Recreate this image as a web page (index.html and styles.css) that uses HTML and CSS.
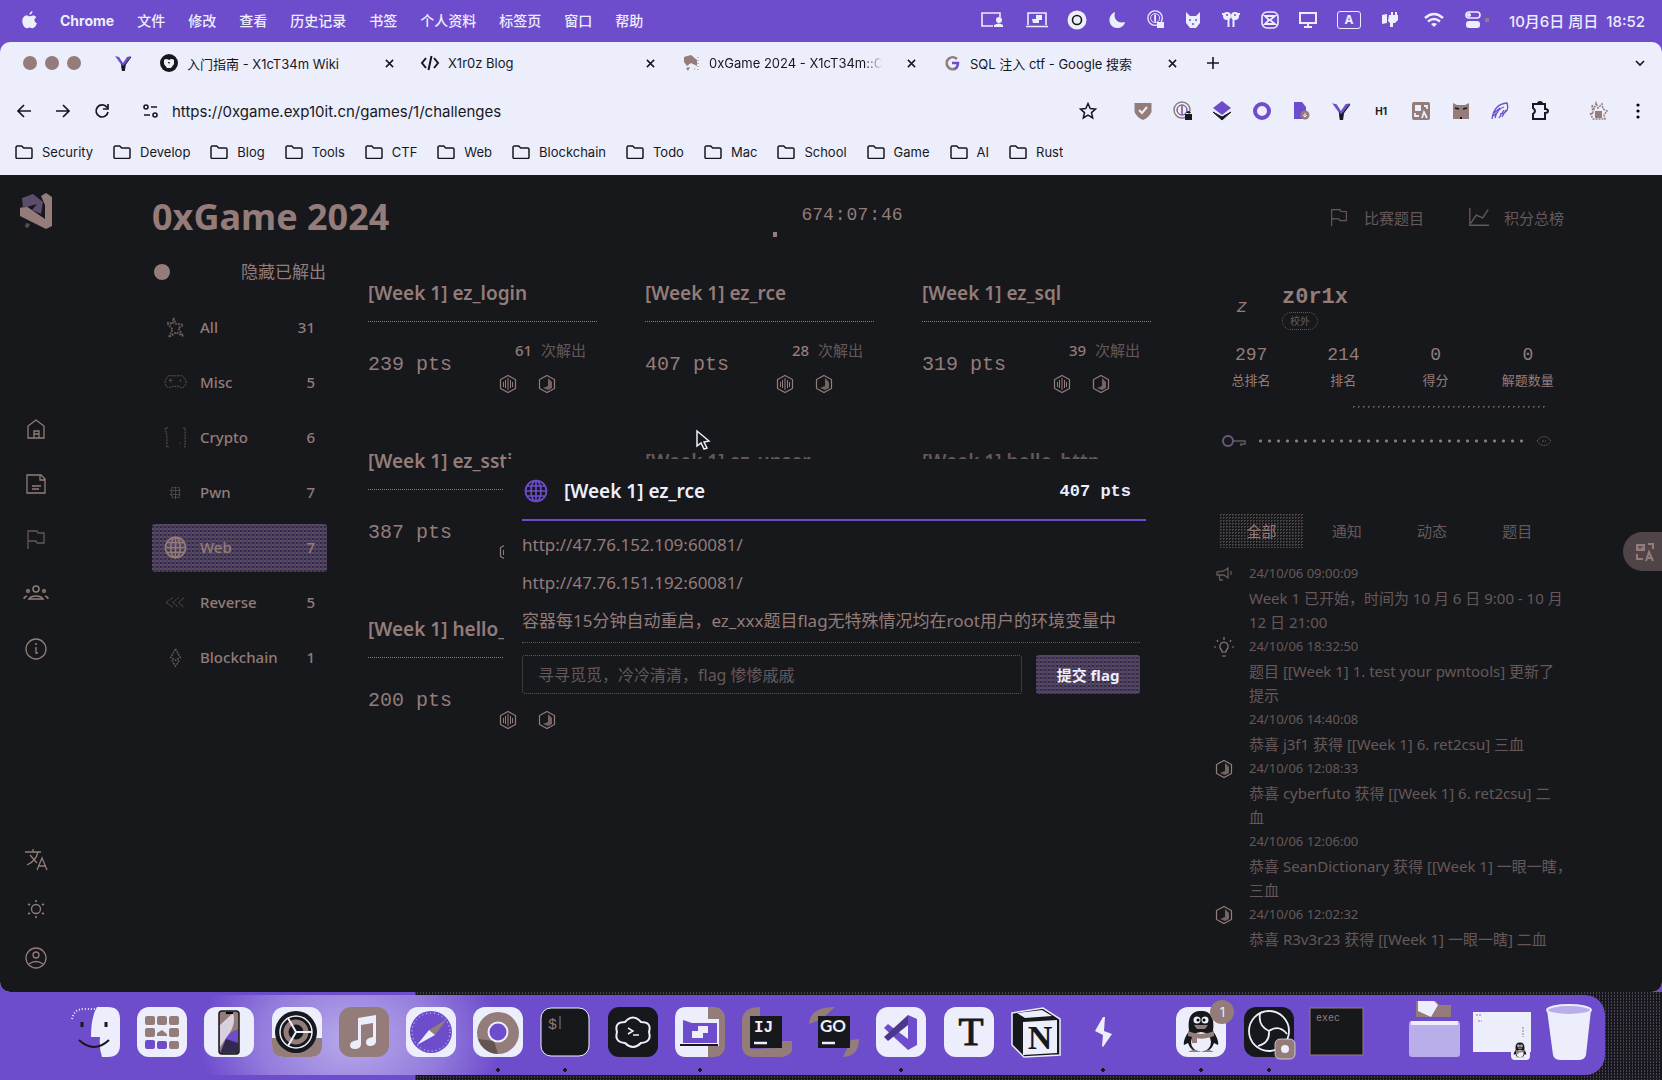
FILE: index.html
```html
<!DOCTYPE html>
<html lang="zh-CN">
<head>
<meta charset="utf-8">
<title>0xGame 2024</title>
<link rel="stylesheet" href="styles.css">
</head>
<body>
<svg class="sprite" aria-hidden="true">
  <symbol id="folder" viewBox="0 0 18 14"><path d="M1 12.2V2.4C1 1.6 1.500 1 2.300 1h4.400l2 2h7c.8 0 1.300.6 1.300 1.300v8c0 .7-.5 1.200-1.300 1.200H2.300C1.500 13.500 1 13 1 12.200z" fill="none" stroke="currentColor" stroke-width="1.500"/></symbol>
  <symbol id="close" viewBox="0 0 10 10"><path d="M1 1l8 8M9 1L1 9" stroke="currentColor" stroke-width="1.700"/></symbol>
  <symbol id="vee" viewBox="0 0 18 18"><path d="M1 2l4 1 4 6 4-6 4-1-5 8-1 7H8l-1-7z" fill="#6e4dcd"/><path d="M1 3l6 7 1 7h2l1-7-2 2z" fill="#17181c"/><path d="M17 3l-6 8-1 6" fill="none" stroke="#17181c"/></symbol>
  <symbol id="globe" viewBox="0 0 24 24"><g fill="none" stroke="currentColor" stroke-width="1.700"><circle cx="12" cy="12" r="10.500"/><ellipse cx="12" cy="12" rx="5" ry="10.500"/><path d="M1.500 12h21M3 7h18M3 17h18M12 1.500v21"/></g></symbol>
  <symbol id="flag" viewBox="0 0 24 24"><path d="M4 22V4h9l1 2h6v10h-7l-1-2H4" fill="none" stroke="currentColor" stroke-width="1.300"/></symbol>
  <symbol id="hexa" viewBox="0 0 20 20"><path d="M10 1.500l7.500 4v9l-7.500 4-7.500-4v-9z" fill="none" stroke="currentColor" stroke-width="1.200"/><path d="M10 4v12M7.500 6v8M12.500 6v8M5.500 8v5M14.500 8v5" stroke="currentColor"/></symbol>
  <symbol id="hexb" viewBox="0 0 20 20"><path d="M10 1.500l7.500 4v9l-7.500 4-7.500-4v-9z" fill="none" stroke="currentColor" stroke-width="1.200"/><path d="M11 4l4 4v6l-4 2-5-2 5-2z" fill="currentColor" opacity=".75"/></symbol>
  <symbol id="onepass" viewBox="0 0 20 20"><circle cx="9" cy="9" r="8" fill="none" stroke="currentColor" stroke-width="1.500"/><circle cx="9" cy="9" r="5" fill="none" stroke="currentColor"/><path d="M9 5v8" stroke="currentColor" stroke-width="2"/></symbol>
  <symbol id="penguin" viewBox="0 0 50 50"><path d="M13 24C11 8 17 4 25 4s14 4 12 20c4 6 6 11 5 14l-4-2c-2 6-6 9-13 9s-11-3-13-9l-4 2c-1-3 1-8 5-14z" fill="#17181c"/><ellipse cx="25" cy="35" rx="10" ry="10" fill="#eceefc"/><path d="M12 24q13 6 26 0v5q-12 4-17 2v5h-5v-6l-4-1zM18 18h14l-3 4h-8zM12 45q6-4 12 0zM26 45q6-4 12 0z" fill="#937c79"/><circle cx="21" cy="13" r="3.500" fill="#eceefc"/><circle cx="29" cy="13" r="3.500" fill="#eceefc"/><circle cx="22" cy="13" r="1.500"/><circle cx="28" cy="13" r="1.500"/></symbol>
</svg>

<header class="menubar">
  <nav class="menus" aria-label="系统菜单">
    <svg width="15" height="18" viewBox="0 0 15 18"><path d="M10.500 0c.1 2-1.200 3.700-3 3.800C7.300 2.100 8.800.4 10.500 0zM14.300 6.200c-2.700 1.700-2.200 4.900.6 6-1 2.800-2.500 5-4.300 5-1.200 0-1.600-.8-3-.8s-1.900.8-3 .8C2.500 17.200.3 13.500.3 10c0-3.600 2.200-5.500 4.400-5.500 1.200 0 2.200.8 3 .8s1.900-.9 3.400-.9c1.100 0 2.400.6 3.200 1.800z" fill="currentColor"/></svg>
    <b>Chrome</b><span>文件</span><span>修改</span><span>查看</span><span>历史记录</span><span>书签</span><span>个人资料</span><span>标签页</span><span>窗口</span><span>帮助</span>
  </nav>
  <div class="status">
    <svg width="26" height="18" viewBox="0 0 26 18"><path d="M14 15H3V2h18v4" fill="none" stroke="currentColor" stroke-width="1.600"/><circle cx="20" cy="9" r="3" fill="currentColor"/><path d="M15 16v-2q5-3 9 0v2z" fill="currentColor"/></svg>
    <svg width="24" height="18" viewBox="0 0 24 18"><path d="M3 14V2h18v12M1 15.500h22" fill="none" stroke="currentColor" stroke-width="1.600"/><path d="M7 8h4V4h6v5h-3v3H8z" fill="currentColor"/></svg>
    <svg width="20" height="20" viewBox="0 0 20 20"><circle cx="10" cy="10" r="9.500" fill="currentColor"/><circle cx="10" cy="10" r="4.500" fill="none" stroke="#17181c" stroke-width="1.600"/></svg>
    <svg width="20" height="18" viewBox="0 0 20 18"><path d="M8 1c-2 7 3 12 10 10-1 4-4 6-8 6-8 0-11-12-2-16z" fill="currentColor"/></svg>
    <svg width="18" height="20" viewBox="0 0 18 20"><use href="#onepass" width="18" height="18"/><path d="M10 12h7v6h-7z" fill="currentColor"/></svg>
    <svg width="16" height="18" viewBox="0 0 16 18"><path d="M1 1l4 4h6l4-4v11l-4 5H5l-4-5z" fill="currentColor"/><path d="M4 9h2M10 9h2M7 13h2" stroke="#6e4dcd" stroke-width="1.500"/></svg>
    <svg width="20" height="18" viewBox="0 0 20 18"><circle cx="6" cy="5" r="4" fill="currentColor"/><circle cx="14" cy="5" r="4" fill="currentColor"/><path d="M7.500 5v11M12.500 5v11M1 3h2M17 3h2" fill="none" stroke="currentColor" stroke-width="2"/><circle cx="6" cy="4" r="1" fill="#6e4dcd"/><circle cx="14" cy="4" r="1" fill="#6e4dcd"/></svg>
    <svg width="18" height="18" viewBox="0 0 18 18"><rect x="1" y="1" width="16" height="16" rx="5" fill="none" stroke="currentColor" stroke-width="1.600"/><path d="M4 5h10L9 9l5 4H4l4-4z" fill="none" stroke="currentColor" stroke-width="1.800"/></svg>
    <svg width="18" height="18" viewBox="0 0 18 18"><rect x="1" y="2" width="16" height="10" fill="none" stroke="currentColor" stroke-width="2"/><path d="M5 16h8M9 12v4" stroke="currentColor" stroke-width="2"/></svg>
    <span class="ime">A</span>
    <svg width="22" height="18" viewBox="0 0 22 18"><path d="M1 4l5-1v9l-5 1zM8 4h2V1h2v3h2V1h2v3h1v5l-3 3h-2v4H9v-4l-2-2z" fill="currentColor"/></svg>
    <svg width="22" height="16" viewBox="0 0 22 16"><path d="M2 6q9-8 18 0M5 9.500q6-5 12 0" fill="none" stroke="currentColor" stroke-width="2.400"/><path d="M11 15l-3-3q3-2 6 0z" fill="currentColor"/></svg>
    <svg width="24" height="18" viewBox="0 0 24 18"><rect x="1" y="1" width="14" height="6" rx="3" fill="none" stroke="currentColor" stroke-width="1.600"/><rect x="1" y="10" width="14" height="7" rx="3" fill="currentColor"/><circle cx="4" cy="4" r="2" fill="currentColor"/><path d="M20 7h4v4h-4z" fill="#937c79"/></svg>
    <time>10月6日 周日&nbsp; 18:52</time>
  </div>
</header>

<div class="window">
  <div class="tabs">
    <div class="lights"><i></i><i></i><i></i></div>
    <svg class="pinned" width="18" height="18"><use href="#vee"/></svg>
    <div class="tab"><svg width="18" height="18" viewBox="0 0 18 18"><circle cx="9" cy="9" r="9" fill="#17181c"/><path d="M4 6q2-2 5 0 3-2 5 0v4l-3 4H7L4 10z" fill="#eceefc"/><path d="M8 8l1 2 1-2z"/></svg><span>入门指南 - X1cT34m Wiki</span><button aria-label="关闭"><svg width="9" height="9"><use href="#close"/></svg></button></div>
    <div class="tab"><svg width="18" height="18" viewBox="0 0 18 18"><path d="M5 4L1 9l4 5M13 4l4 5-4 5M10.500 2l-3 14" fill="none" stroke="#17181c" stroke-width="2"/></svg><span>X1r0z Blog</span><button aria-label="关闭"><svg width="9" height="9"><use href="#close"/></svg></button></div>
    <div class="tab"><svg width="18" height="18" viewBox="0 0 18 18"><path d="M2 3l7-2 6 5v6l-6-3-4 3-3-4zM4 14l4-1-2 4z" fill="#937c79"/><path d="M16 3v13M12 15h3" stroke="#937c79" stroke-dasharray="1 2"/></svg><span class="fade">0xGame 2024 - X1cT34m::C</span><button aria-label="关闭"><svg width="9" height="9"><use href="#close"/></svg></button></div>
    <div class="tab"><svg width="18" height="18" viewBox="0 0 18 18"><path d="M14 5A6 6 0 1 0 12.500 14.500" fill="none" stroke="#937c79" stroke-width="2.600"/><path d="M9 9h6q0 4-3 6" fill="none" stroke="#6e4dcd" stroke-width="2.500"/></svg><span>SQL 注入 ctf - Google 搜索</span><button aria-label="关闭"><svg width="9" height="9"><use href="#close"/></svg></button></div>
    <button class="plus" aria-label="新标签页"><svg width="12" height="12" viewBox="0 0 12 12"><path d="M6 0v12M0 6h12" stroke="currentColor" stroke-width="1.600"/></svg></button>
    <button class="more" aria-label="搜索标签页"><svg width="10" height="7" viewBox="0 0 10 7"><path d="M1 1l4 4 4-4" fill="none" stroke="currentColor" stroke-width="1.700"/></svg></button>
  </div>
  <div class="toolbar">
    <button aria-label="后退"><svg width="16" height="14" viewBox="0 0 16 14"><path d="M15 7H2M8 1L2 7l6 6" fill="none" stroke="currentColor" stroke-width="1.700"/></svg></button>
    <button aria-label="前进"><svg width="16" height="14" viewBox="0 0 16 14"><path d="M1 7h13M8 1l6 6-6 6" fill="none" stroke="currentColor" stroke-width="1.700"/></svg></button>
    <button aria-label="刷新"><svg width="16" height="16" viewBox="0 0 16 16"><path d="M13 4.500A6 6 0 1 0 14 9M14 1v5H9" fill="none" stroke="currentColor" stroke-width="1.700"/></svg></button>
    <svg class="tune" width="15" height="14" viewBox="0 0 15 14"><g fill="none" stroke="currentColor" stroke-width="1.600"><circle cx="3" cy="3" r="2"/><path d="M8 3h6M1 11h6"/><circle cx="12" cy="11" r="2"/></g></svg>
    <input class="url" aria-label="地址" value="https://0xgame.exp10it.cn/games/1/challenges">
    <svg class="star" width="18" height="18" viewBox="0 0 18 18"><path d="M9 1.500l2.200 5 5.300.5-4 3.600 1.200 5.400L9 13.200 4.300 16l1.200-5.400-4-3.600 5.300-.5z" fill="none" stroke="currentColor" stroke-width="1.500"/></svg>
    <div class="exts">
      <svg viewBox="0 0 20 20"><path d="M1.500 2h17v9q-2 5-8.500 8-6.500-3-8.500-8z" fill="#937c79"/><path d="M6 9l3 3 5-6" fill="none" stroke="#eceefc" stroke-width="2"/></svg>
      <svg viewBox="0 0 20 20"><g color="#937c79"><use href="#onepass"/></g><circle cx="9" cy="9" r="5" fill="none" stroke="#6e4dcd"/><path d="M12 13h7v6h-7zM13 12q2.500-4 5 0" fill="#17181c"/></svg>
      <svg viewBox="0 0 20 20"><path d="M10 0l9 7-9 7-9-7z" fill="#6e4dcd"/><path d="M1 11l9 5 9-5-9 8z" fill="#17181c" stroke="#17181c"/></svg>
      <svg viewBox="0 0 20 20"><circle cx="10" cy="10" r="7" fill="none" stroke="#6e4dcd" stroke-width="4"/></svg>
      <svg viewBox="0 0 20 20"><path d="M2 1h8l4 5v12H2z" fill="#6e4dcd"/><circle cx="13" cy="14" r="4.500" fill="#937c79"/><path d="M13 12v4M11 14l2 2 2-2" stroke="#eceefc" fill="none"/></svg>
      <svg viewBox="0 0 20 20"><use href="#vee"/></svg>
      <b>H1</b>
      <svg viewBox="0 0 20 20"><rect x="1" y="1" width="18" height="18" rx="2" fill="#937c79"/><path d="M4 4h6v6H4z" fill="#eceefc"/><path d="M13 5h3v3M4 12v3h4M11 17l2-6 3 6" fill="none" stroke="#eceefc" stroke-width="1.800"/></svg>
      <svg viewBox="0 0 20 20"><path d="M2 2l4 2h8l4-2v16H2z" fill="#937c79"/><path d="M4 7l4 1M16 7l-4 1M9 17h2" stroke="#17181c" stroke-width="1.800"/></svg>
      <svg viewBox="0 0 20 20"><path d="M2 18Q4 3 17 2 20 12 10 13M5 17q2-9 9-11M9 17l5-8M12 16l4-7M4 12l6-5M3 15l5-4" fill="none" stroke="#6e4dcd" stroke-width="1.300"/></svg>
      <svg viewBox="0 0 20 20"><path d="M3 3h12v5q3 0 3 2t-3 2v6H3v-5q4-3 0-6zM8 3q0-2 2-2t2 2" fill="none" stroke="currentColor" stroke-width="2"/></svg>
    </div>
    <svg class="avatar" width="20" height="20" viewBox="0 0 20 20"><path d="M4 4l2 4 2-6 2 5 4-4 1 5 4 2-3 4 1 4H5L2 12l3 1z" fill="none" stroke="#937c79" stroke-width="1.500" stroke-dasharray="2 1"/><path d="M7 10h7v7H7z" fill="#937c79"/></svg>
    <svg width="4" height="18" viewBox="0 0 4 18"><circle cx="2" cy="3" r="1.600"/><circle cx="2" cy="9" r="1.600"/><circle cx="2" cy="15" r="1.600"/></svg>
  </div>
  <nav class="bookmarks" aria-label="书签">
    <a href="#"><svg><use href="#folder"/></svg>Security</a><a href="#"><svg><use href="#folder"/></svg>Develop</a><a href="#"><svg><use href="#folder"/></svg>Blog</a><a href="#"><svg><use href="#folder"/></svg>Tools</a><a href="#"><svg><use href="#folder"/></svg>CTF</a><a href="#"><svg><use href="#folder"/></svg>Web</a><a href="#"><svg><use href="#folder"/></svg>Blockchain</a><a href="#"><svg><use href="#folder"/></svg>Todo</a><a href="#"><svg><use href="#folder"/></svg>Mac</a><a href="#"><svg><use href="#folder"/></svg>School</a><a href="#"><svg><use href="#folder"/></svg>Game</a><a href="#"><svg><use href="#folder"/></svg>AI</a><a href="#"><svg><use href="#folder"/></svg>Rust</a>
  </nav>

  <div class="app">
    <aside class="rail">
      <svg width="34" height="38" viewBox="0 0 34 38"><path d="M22 4l5-3 6 4v29l-6 3L1 24v-8l6-2 19 13V13z" fill="currentColor"/><path d="M3 6l11-4 10 8-2 12-9-4 5-6-14 4z" fill="#5b4e6c"/><path d="M7 31l4 1-2 4-3-1z" fill="#5b4e50"/></svg>
      <nav class="rail-main" aria-label="导航">
        <a href="#" aria-label="主页"><svg viewBox="0 0 24 24"><path d="M4 21V9l8-6 8 6v12zM10 21v-7h5v7M10 17h5" fill="none" stroke="currentColor" stroke-width="1.300"/></svg></a>
        <a href="#" aria-label="文章"><svg viewBox="0 0 24 24"><path d="M3 3h14l4 4v14H3zM16 3v5h5M8 14h9M8 17h7" fill="none" stroke="currentColor" stroke-width="1.300"/></svg></a>
        <a href="#" class="dim" aria-label="比赛"><svg><use href="#flag"/></svg></a>
        <a href="#" aria-label="队伍"><svg viewBox="0 0 24 24"><g fill="none" stroke="currentColor" stroke-width="1.500"><circle cx="12" cy="7" r="3"/><circle cx="4" cy="9" r="1.300"/><circle cx="20" cy="9" r="1.300"/><path d="M5 17q2-3 7-3t7 3zM0 17q0-2 3-3M24 17q0-2-3-3"/></g></svg></a>
        <a href="#" aria-label="关于"><svg viewBox="0 0 24 24"><circle cx="12" cy="12" r="10" fill="none" stroke="currentColor" stroke-width="1.300"/><path d="M11 7h2M11 11h1v5h2" fill="none" stroke="currentColor" stroke-width="1.300"/></svg></a>
      </nav>
      <nav class="rail-foot" aria-label="设置">
        <a href="#" aria-label="语言"><svg viewBox="0 0 24 24"><path d="M1 4h16M9 1v3M14 4q-2 9-11 13M6 7l7 8M13 22l5-12 5 12M14 18h8" fill="none" stroke="currentColor" stroke-width="1.300"/></svg></a>
        <a href="#" aria-label="主题"><svg viewBox="0 0 24 24"><circle cx="12" cy="12" r="4.500" fill="none" stroke="currentColor" stroke-width="1.300"/><path d="M12 3v2M12 19v2M4 7l2 1M18 16l2 1M4 17l2-1M18 8l2-1" stroke="currentColor" stroke-width="1.600"/></svg></a>
        <a href="#" aria-label="账户"><svg viewBox="0 0 24 24"><g fill="none" stroke="currentColor" stroke-width="1.300"><circle cx="12" cy="12" r="10"/><circle cx="12" cy="9" r="3"/><path d="M5 18q7-5 14 0"/></g></svg></a>
      </nav>
    </aside>

    <main class="page">
      <div class="head">
        <h1>0xGame 2024</h1>
        <div class="timer"><time>674<i>:</i>07<i>:</i>46</time><span class="bar"></span></div>
        <nav class="links" aria-label="比赛">
          <a href="#"><svg><use href="#flag"/></svg>比赛题目</a>
          <a href="#"><svg viewBox="0 0 24 24"><path d="M2 2v19h21M3 19l6-9 7 3 6-9" fill="none" stroke="currentColor" stroke-width="1.500"/></svg>积分总榜</a>
        </nav>
      </div>
      <div class="cols">
        <div class="left">
          <label class="toggle"><input type="checkbox"><span>隐藏已解出</span></label>
          <div class="cats">
            <button><svg class="dim" viewBox="0 0 24 24"><path d="M10 2l2 6 8 1-5 4 5 8-7-4-8 5 4-8-6-7 6 1z" fill="none" stroke="currentColor" stroke-width="2" stroke-dasharray="2 1"/></svg><span>All</span><span>31</span></button>
            <button><svg class="dim" viewBox="0 0 24 24"><path d="M5 5h14q4 3 4 8-3 7-7 3H8q-4 4-7-3 0-5 4-8zM7 8v4M5 10h4M17 9v3" fill="none" stroke="currentColor" stroke-dasharray="2 1"/></svg><span>Misc</span><span>5</span></button>
            <button><svg class="dim" viewBox="0 0 24 24"><path d="M4 2H1l2 8v12h2M20 2h2v20h-2M16 18h1" fill="none" stroke="currentColor" stroke-dasharray="2 1"/></svg><span>Crypto</span><span>6</span></button>
            <button><svg class="dim" viewBox="0 0 24 24"><path d="M8 7h8v10H8zM6 10h12M6 14h12M12 6v13" fill="none" stroke="currentColor" stroke-dasharray="2 1"/></svg><span>Pwn</span><span>7</span></button>
            <button class="on"><svg><use href="#globe"/></svg><span>Web</span><span>7</span></button>
            <button><svg class="dim" viewBox="0 0 24 24"><path d="M9 7l-7 5 7 5M15 7l-6 5 6 5M21 7l-6 5 6 5" fill="none" stroke="currentColor" stroke-dasharray="2 1"/></svg><span>Reverse</span><span>5</span></button>
            <button><svg class="dim" viewBox="0 0 24 24"><path d="M12 3l5 9-5 3-5-3zM8 15l4 6 4-6" fill="none" stroke="currentColor" stroke-width="1.500" stroke-dasharray="2 1"/></svg><span>Blockchain</span><span>1</span></button>
          </div>
        </div>

        <section class="cards">
          <article><h2>[Week 1] ez_login</h2><div class="row"><span class="pts">239 pts</span><div class="solved"><p><b>61</b> 次解出</p><svg><use href="#hexa"/></svg><svg><use href="#hexb"/></svg></div></div></article>
          <article><h2>[Week 1] ez_rce</h2><div class="row"><span class="pts">407 pts</span><div class="solved"><p><b>28</b> 次解出</p><svg><use href="#hexa"/></svg><svg><use href="#hexb"/></svg></div></div></article>
          <article><h2>[Week 1] ez_sql</h2><div class="row"><span class="pts">319 pts</span><div class="solved"><p><b>39</b> 次解出</p><svg><use href="#hexa"/></svg><svg><use href="#hexb"/></svg></div></div></article>
          <article><h2>[Week 1] ez_ssti</h2><div class="row"><span class="pts">387 pts</span><div class="solved"><p></p><svg><use href="#hexa"/></svg><svg><use href="#hexb"/></svg></div></div></article>
          <article class="dim"><h2>[Week 1] ez_unser</h2></article>
          <article class="dim"><h2>[Week 1] hello_http</h2></article>
          <article><h2>[Week 1] hello_</h2><div class="row"><span class="pts">200 pts</span><div class="solved"><p></p><svg><use href="#hexa"/></svg><svg><use href="#hexb"/></svg></div></div></article>
        </section>

        <aside class="side">
          <div class="user"><span class="ava">z</span><div><h3>z0r1x</h3><span class="pill">校外</span></div></div>
          <dl class="stats"><div><dd>297</dd><dt>总排名</dt></div><div><dd>214</dd><dt>排名</dt></div><div><dd>0</dd><dt>得分</dt></div><div><dd>0</dd><dt>解题数量</dt></div></dl>
          <div class="progress"></div>
          <div class="token"><svg width="24" height="16" viewBox="0 0 24 16"><circle cx="6" cy="8" r="5" fill="none" stroke="#6a5a78" stroke-width="2"/><path d="M11 8h12v3h-4v2" fill="none" stroke="currentColor" stroke-width="1.500"/></svg><span class="dots"></span><svg width="16" height="12" viewBox="0 0 16 12"><path d="M1 6q7-9 14 0-7 9-14 0zM6 6h4" fill="none" stroke="currentColor" stroke-dasharray="2 1"/></svg></div>
          <div class="filter"><button class="on">全部</button><button>通知</button><button>动态</button><button>题目</button></div>
          <ul class="feed">
            <li><svg viewBox="0 0 20 20"><path d="M3 8l7-1 4-3v10l-4-3H3zM5 11l1 5h3M17 7v4" fill="none" stroke="currentColor" stroke-width="1.300"/></svg><div><time>24/10/06 09:00:09</time><p>Week 1 已开始，时间为 10 月 6 日 9:00 - 10 月<br>12 日 21:00</p></div></li>
            <li><svg class="lit" viewBox="0 0 20 20"><path d="M8 15q0-2-2-4Q5 6 10 5q5 1 4 6-2 2-2 4zM10 0v3M0 10h2M18 10h2M3 3l1 2M17 3l-1 2M8 19h4" fill="none" stroke="currentColor" stroke-width="1.200"/></svg><div><time>24/10/06 18:32:50</time><p>题目 [[Week 1] 1. test your pwntools] 更新了<br>提示</p></div></li>
            <li><div><time>24/10/06 14:40:08</time><p>恭喜 j3f1 获得 [[Week 1] 6. ret2csu] 三血</p></div></li>
            <li><svg class="lit"><use href="#hexb"/></svg><div><time>24/10/06 12:08:33</time><p>恭喜 cyberfuto 获得 [[Week 1] 6. ret2csu] 二<br>血</p></div></li>
            <li><div><time>24/10/06 12:06:00</time><p>恭喜 SeanDictionary 获得 [[Week 1] 一眼一瞎，<br>三血</p></div></li>
            <li><svg class="lit"><use href="#hexb"/></svg><div><time>24/10/06 12:02:32</time><p>恭喜 R3v3r23 获得 [[Week 1] 一眼一瞎] 二血</p></div></li>
          </ul>
        </aside>
      </div>
    </main>

    <section class="modal" role="dialog" aria-label="[Week 1] ez_rce">
      <header><svg><use href="#globe"/></svg><h2>[Week 1] ez_rce</h2><span>407 pts</span></header>
      <p><a href="#">http://47.76.152.109:60081/</a></p>
      <p><a href="#">http://47.76.151.192:60081/</a></p>
      <p class="note">容器每15分钟自动重启，ez_xxx题目flag无特殊情况均在root用户的环境变量中</p>
      <form><input aria-label="flag" placeholder="寻寻觅觅，冷冷清清，flag 惨惨戚戚"><button type="button">提交 flag</button></form>
    </section>
    <button class="translate" aria-label="翻译"><svg width="20" height="20" viewBox="0 0 20 20"><path d="M1 2h9v7H1z" fill="currentColor"/><path d="M3 5h5M5 4v3" stroke="#4a4145"/><path d="M13 2h5v5M2 12v5h6M11 19l3-9 4 9M12 16h5" fill="none" stroke="currentColor" stroke-width="2"/></svg></button>
    <svg class="cursor" width="15" height="21" viewBox="0 0 15 21"><path d="M1 1v15l4-3 3 6 3-1-3-6 5-1z" fill="#17181c" stroke="#eceefc" stroke-width="1.500"/></svg>
  </div>
</div>

<footer class="desk">
  <div class="dock">
    <svg class="app-icon" viewBox="0 0 50 50"><path d="M27 0h11q12 0 12 12v26q0 12-12 12h-6q-3-8-2-20h-9q0-20 6-30z" fill="#eceefc"/><path d="M12 15v5M36 15v5" stroke="#17181c" stroke-width="3"/><path d="M9 33q15 14 30 0" fill="none" stroke="#17181c" stroke-width="2"/><path d="M2 12Q4 2 14 2h11" fill="none" stroke="#eceefc" stroke-width="2" stroke-dasharray="1 2"/></svg>
    <svg class="app-icon" viewBox="0 0 50 50"><rect width="50" height="50" rx="12" fill="#eceefc"/><g fill="#937c79"><rect x="8" y="9" width="10" height="9" rx="2"/><rect x="20" y="9" width="10" height="9" rx="2"/><rect x="32" y="9" width="10" height="9" rx="2"/><rect x="8" y="21" width="10" height="9" rx="2"/><path d="M20 29v-3l5-3 5 4v2z"/><rect x="32" y="21" width="10" height="9" rx="2"/><rect x="32" y="34" width="10" height="8" rx="2"/></g><g fill="#6e4dcd"><rect x="8" y="33" width="10" height="9" rx="2"/><rect x="20" y="34" width="10" height="8" rx="2"/></g></svg>
    <svg class="app-icon" viewBox="0 0 50 50"><rect width="50" height="50" rx="12" fill="#eceefc"/><rect x="15" y="4" width="20" height="43" rx="3" fill="#937c79" stroke="#17181c" stroke-width="1.500"/><path d="M16 45l8-18 10-5v23z" fill="#6e4dcd"/><path d="M16 40V18l13-12q4 12-7 25z" fill="#d8d0df"/><path d="M16 47l6-15 12 4v10z" fill="#17181c" opacity=".7"/><path d="M22 5h7v2h-7z"/></svg>
    <svg class="app-icon" viewBox="0 0 50 50"><rect width="50" height="50" rx="12" fill="#eceefc"/><path d="M0 31h50v7q0 12-12 12H12Q0 50 0 38z" fill="#937c79"/><circle cx="24" cy="25" r="21" fill="#17181c"/><circle cx="24" cy="25" r="16" fill="none" stroke="#eceefc" stroke-width="1.500"/><circle cx="24" cy="25" r="10" fill="none" stroke="#937c79" stroke-width="5"/><path d="M24 25h16M24 25l-8-14M24 25l-8 14" stroke="#eceefc" stroke-width="2"/></svg>
    <svg class="app-icon" viewBox="0 0 50 50"><rect width="50" height="50" rx="12" fill="#937c79"/><path d="M19 11l18-3v27q-1 4-6 4-4 0-4-4t7-5V16l-12 2v20q-1 4-6 4-5 0-5-4t8-5z" fill="#eceefc"/></svg>
    <svg class="app-icon" viewBox="0 0 50 50"><rect width="50" height="50" rx="12" fill="#eceefc"/><circle cx="25" cy="25" r="21" fill="#6e4dcd"/><circle cx="25" cy="25" r="19" fill="none" stroke="#eceefc" stroke-dasharray="1 3"/><path d="M41 12L29 28l-6-5z" fill="#937c79"/><path d="M11 38l12-15 6 5z" fill="#eceefc"/></svg>
    <svg class="app-icon open" viewBox="0 0 50 50"><rect width="50" height="50" rx="12" fill="#eceefc"/><circle cx="25" cy="26" r="21" fill="#937c79"/><path d="M5 32q5 14 20 15l-4-13z" fill="#17181c" opacity=".4"/><circle cx="25" cy="25" r="9.500" fill="#6e4dcd" stroke="#eceefc" stroke-width="2"/></svg>
    <svg class="app-icon open" viewBox="0 0 50 50"><rect x="1" y="1" width="48" height="48" rx="10" fill="#17181c" stroke="#eceefc"/><text x="8" y="22" class="mono" font-size="15">$</text><path d="M20 9v13" stroke="#937c79"/></svg>
    <svg class="app-icon" viewBox="0 0 50 50"><rect width="50" height="50" rx="11" fill="#17181c"/><path d="M17 15q8-9 16 0 11 0 8 10 3 10-8 11-8 8-16 0-11-1-8-11-3-10 8-10z" fill="none" stroke="#eceefc" stroke-width="2"/><path d="M20 21l5 3-5 3M25 28h6" stroke="#eceefc" fill="none" stroke-width="1.500"/></svg>
    <svg class="app-icon open" viewBox="0 0 50 50"><rect width="50" height="50" rx="11" fill="#937c79"/><path d="M11 0h22v12h11v27H33v11H11Q0 50 0 38V12Q0 0 11 0z" fill="#eceefc"/><path d="M8 13l9 3h25v20H8z" fill="#6e4dcd"/><path d="M5 38h38" stroke="#17181c" stroke-width="2"/><path d="M17 24h6v-5h10v7h-5v5H17z" fill="#eceefc"/></svg>
    <svg class="app-icon" viewBox="0 0 50 50"><path d="M0 12Q2 0 18 0v8l-9 12v22l24-1 6-7h11v10q-4 6-12 6H12Q0 50 0 38z" fill="#937c79"/><path d="M8 9h32v32H8z" fill="#17181c"/><text x="12" y="25" class="serif" font-size="16">IJ</text><path d="M12 36h13" stroke="#eceefc" stroke-width="2.500"/></svg>
    <svg class="app-icon" viewBox="0 0 50 50"><path d="M0 17Q1 0 26 0L13 12zM50 32q0 17-16 18l8-17z" fill="#937c79"/><path d="M9 9h32v32H9z" fill="#17181c"/><text x="11" y="25" class="sans" font-size="17">GO</text><path d="M13 36h13" stroke="#eceefc" stroke-width="2.500"/></svg>
    <svg class="app-icon open" viewBox="0 0 50 50"><rect width="50" height="50" rx="12" fill="#eceefc"/><path d="M32 8l9 4v26l-9 5L8 21l4-4 20 15z" fill="#6e4dcd"/><path d="M32 8v10L12 34l-4-4z" fill="#4b3888"/></svg>
    <svg class="app-icon" viewBox="0 0 50 50"><rect width="50" height="50" rx="12" fill="#eceefc"/><text x="27" y="38" text-anchor="middle" class="tee light" font-size="41">T</text></svg>
    <svg class="app-icon" viewBox="0 0 50 50"><path d="M1 6l31-5 17 11v36l-36 2L1 38z" fill="#17181c" stroke="#eceefc" stroke-width="1.500"/><path d="M6 6l25-3 10 6-27 2zM12 15l34-2v33l-34 2z" fill="#eceefc"/><text x="29" y="42" text-anchor="middle" class="tee" font-size="34">N</text></svg>
    <svg class="app-icon open" viewBox="0 0 50 50"><path d="M25 10l-8 14 8 4-1 11 1 1 9-13-8-3 1-14z" fill="#eceefc"/></svg>
    <span class="gap"></span>
    <div class="app-icon open"><svg viewBox="0 0 50 50"><rect width="50" height="50" rx="12" fill="#eceefc"/><use href="#penguin"/></svg><span class="badge">1</span></div>
    <svg class="app-icon open" viewBox="0 0 50 50"><rect width="50" height="50" rx="12" fill="#17181c"/><g fill="none" stroke="#eceefc" stroke-width="1.800"><circle cx="25" cy="24" r="20"/><path d="M25 24q-11-5-9-17M25 24q10-7 18 3M25 24q1 12-11 15"/></g><rect x="31" y="32" width="20" height="20" rx="5" fill="#937c79" stroke="#eceefc" stroke-width=".7"/><circle cx="41" cy="42" r="4" fill="#eceefc"/></svg>
    <svg class="app-icon" viewBox="0 0 50 50"><path d="M-1 1h53v47H-1z" fill="#17181c" stroke="#937c79"/><text x="5" y="14" class="mono" font-size="10">exec</text></svg>
    <span class="gap"></span>
    <svg class="app-icon" viewBox="0 0 50 50"><path d="M7-6h20l3 4h12v12H7z" fill="#937c79"/><path d="M9-6h16l4 4-7 12L9 4z" fill="#eceefc"/><rect y="14" width="51" height="36" rx="3" fill="#b9aeea"/><path d="M2 14h47v4H2z" fill="#eceefc"/></svg>
    <svg class="app-icon" viewBox="0 0 50 50"><path d="M-3 5h58v40H-3z" fill="#eceefc"/><path d="M0 8h5M2 14h4M47 20v10" stroke="#937c79" stroke-dasharray="2 1"/><rect x="35" y="34" width="19" height="19" rx="4" fill="#eceefc"/><use href="#penguin" x="35" y="34" width="18" height="18"/></svg>
    <svg class="app-icon" viewBox="0 0 50 50"><path d="M3 3h44l-5 45q-1 5-8 5H17q-7 0-8-5z" fill="#eceefc"/><ellipse cx="25" cy="3" rx="22" ry="5" fill="#b9aeea" stroke="#eceefc" stroke-width="2"/></svg>
  </div>
</footer>
</body>
</html>
```
FILE: styles.css
```css
:root {
  --ink: #17181c;
  --tan: #937c79;
  --dim: #665859;
  --purple: #6e4dcd;
  --pale: #eceefc;
  --ui: Inter, "Noto Sans CJK SC", sans-serif;
  --body: "Noto Sans", "Noto Sans CJK SC", sans-serif;
  --code: "Liberation Mono", "Noto Sans CJK SC", monospace;
}

* { box-sizing: border-box; }

body {
  margin: 0;
  min-height: 100vh;
  display: flex;
  flex-direction: column;
  background: var(--purple);
  color: var(--ink);
  font-family: var(--ui);
  font-size: 13px;
  overflow: hidden;
}

.sprite { position: absolute; width: 0; height: 0; }
svg { display: block; flex: none; overflow: visible; }
button, input { font: inherit; color: inherit; border: 0; background: none; padding: 0; margin: 0; }
a { color: inherit; text-decoration: none; }
h1, h2, h3, p, dl, dd, ul { margin: 0; padding: 0; }

/* system menu bar */
.menubar {
  height: 42px;
  padding: 0 17px 2px 22px;
  display: flex;
  align-items: center;
  justify-content: space-between;
  color: var(--pale);
  font-size: 14px;
  font-weight: 500;
}
.menus { display: flex; align-items: center; gap: 23px; }
.status { display: flex; align-items: center; gap: 20px; }
.status svg:nth-child(2) { margin-right: -2px; }
.ime { width: 24px; height: 18px; border: 1px solid; border-radius: 3px; font-size: 12px; line-height: 16px; text-align: center; font-weight: 700; }
.status time { font-size: 15px; }

/* browser chrome */
.window {
  flex: 1;
  display: flex;
  flex-direction: column;
  background: var(--pale);
  border-radius: 10px;
  overflow: hidden;
}
.tabs { height: 44px; padding: 0 17px 2px 23px; display: flex; align-items: center; }
.lights { display: flex; gap: 8px; }
.lights i { width: 14px; height: 14px; border-radius: 50%; background: var(--tan); }
.pinned { margin: 0 28px 0 33px; }
.tab { width: 261px; padding-right: 27px; display: flex; align-items: center; gap: 9px; }
.tab span { flex: 1; white-space: nowrap; }
.tab button { margin-left: 12px; }
.fade { -webkit-mask-image: linear-gradient(90deg, #000 88%, transparent 98%); mask-image: linear-gradient(90deg, #000 88%, transparent 98%); }
.plus { margin-left: 3px; }
.more { margin-left: auto; }

.toolbar { height: 50px; padding: 0 22px 0 16px; display: flex; align-items: center; }
.toolbar > button { margin-right: 23px; }
.tune { margin: 0 14px 0 10px; }
.url { flex: 1; font-size: 15px; }
.exts { width: 417px; margin: 0 38px 0 36px; display: flex; justify-content: space-between; align-items: center; }
.exts svg, .exts b { width: 20px; height: 20px; }
.exts b { font-size: 10px; line-height: 20px; text-align: center; }
.avatar { margin-right: 28px; }

.bookmarks { height: 39px; padding: 0 15px 8px; display: flex; align-items: center; gap: 20px; }
.bookmarks a { display: flex; align-items: center; gap: 9px; }
.bookmarks svg { width: 18px; height: 14px; }

/* contest site */
.app {
  position: relative;
  flex: 1;
  display: flex;
  background: var(--ink);
  color: var(--tan);
  font-family: var(--body);
  font-size: 15px;
}
.dim { color: var(--dim); }
.rail { width: 72px; padding: 17px 0 22px; display: flex; flex-direction: column; align-items: center; justify-content: space-between; }
.rail nav { display: flex; flex-direction: column; }
.rail nav svg { width: 24px; height: 24px; }
.rail-main { gap: 31px; }
.rail-foot { gap: 25px; }

.page { flex: 1; min-width: 0; padding: 17px 98px 0 80px; }
.head { height: 50px; display: grid; grid-template-columns: 1fr auto 1fr; align-items: center; }
h1 { font-size: 36px; line-height: 50px; font-weight: 700; }
.timer { position: relative; font: 18px/24px var(--code); margin: 0 12px 4px 0; }
.timer i { font-style: normal; padding: 0 1px; }
.bar { position: absolute; left: -28px; top: 29px; width: 4px; height: 5px; background: var(--tan); }
.links { display: flex; justify-content: flex-end; gap: 44px; color: var(--dim); }
.links a { display: flex; align-items: center; gap: 14px; }
.links svg { width: 22px; height: 22px; }

.cols { display: grid; grid-template-columns: 175px 1fr 345px; }
.left { padding-top: 17px; }
.toggle { display: flex; align-items: center; justify-content: space-between; padding: 0 1px 0 2px; font-size: 17px; line-height: 26px; }
.toggle input { appearance: none; width: 16px; height: 16px; border-radius: 50%; background: var(--tan); }
.cats { margin-top: 19px; display: flex; flex-direction: column; gap: 7px; }
.cats button { height: 48px; padding: 0 12px 2px; display: grid; grid-template-columns: 24px 1fr auto; gap: 12px; align-items: center; text-align: left; font-weight: 500; }
.cats svg { width: 23px; height: 23px; }
.cats .on, .modal button {
  border-radius: 3px;
  background: conic-gradient(#4c3e75 25%, #4d4247 0 50%, #33294a 0 75%, #5b4d60 0) 0 0 / 4px 4px;
}

.cards { padding: 28px 68px 0 41px; display: grid; grid-template-columns: repeat(3, 1fr); grid-auto-rows: 168px; column-gap: 48px; align-content: start; }
h2 { font-size: 19px; line-height: 24px; font-weight: 600; white-space: nowrap; }
.cards article { padding-top: 11px; min-width: 0; }
.cards h2::after {
  content: "";
  display: block;
  height: 1px;
  margin-top: 16px;
  background: repeating-linear-gradient(90deg, var(--tan) 0 1px, transparent 1px 2px);
}
.row { display: flex; justify-content: space-between; padding-top: 18px; }
.pts { font: 20px/50px var(--code); }
.solved { display: grid; grid-template-columns: 20px 20px 1fr; gap: 12px 19px; width: 99px; }
.solved p { grid-column: 1 / 4; width: 88px; height: 22px; line-height: 20px; text-align: right; color: var(--dim); }
.solved b { color: var(--tan); font-weight: 500; margin-right: 5px; }
.solved svg { width: 20px; height: 20px; }

.side { padding-top: 36px; }
.user { display: flex; align-items: center; height: 58px; }
.ava { width: 46px; text-align: center; font: italic 18px var(--code); }
.user div { margin-left: 17px; }
h3 { font: 700 22px/28px var(--code); }
.pill { display: block; width: 36px; height: 18px; line-height: 16px; border: 1px dotted var(--dim); border-radius: 9px; font-size: 10px; text-align: center; color: var(--dim); }
.stats { margin: 6px -10px 0 -14px; display: grid; grid-template-columns: repeat(4, 1fr); text-align: center; }
.stats div { display: flex; flex-direction: column; }
.stats dd { font: 18px/26px var(--code); }
.stats dt { font-size: 13px; line-height: 24px; }
.progress { height: 5px; margin: 12px 18px 0 132px; background: radial-gradient(circle, var(--dim) 1px, transparent 1px) 0 0 / 5px 5px; }
.token { margin: 24px 12px 0 3px; display: flex; align-items: center; gap: 10px; color: var(--dim); }
.dots { flex: 1; height: 4px; background: radial-gradient(circle, var(--tan) 1px, transparent 2px) 0 0 / 9px 4px; }
.filter { margin: 65px 4px 0 0; display: grid; grid-template-columns: repeat(4, 1fr); }
.filter button { height: 34px; padding-bottom: 2px; color: var(--dim); }
.filter .on { color: var(--tan); background: conic-gradient(#4c4345 25%, #17181c 0) 0 0 / 3px 3px; }
.feed { list-style: none; margin: 13px -16px 0 -6px; color: var(--dim); }
.feed li { position: relative; padding-left: 36px; }
.feed svg { position: absolute; left: 1px; top: 3px; width: 20px; height: 20px; }
.feed .lit { color: var(--tan); }
.feed time { display: block; font-size: 13px; line-height: 25px; }
.feed p { line-height: 24px; }

/* challenge dialog lies over the board */
.modal {
  position: absolute;
  left: 50%;
  top: 284px;
  width: 654px;
  transform: translateX(-50%);
  padding: 12px 18px 12px;
  background: var(--ink);
  font-size: 17px;
}
.modal header { height: 50px; display: flex; align-items: center; gap: 16px; padding: 0 15px 8px 2px; border-bottom: 2px solid var(--purple); margin-right: -6px; margin-bottom: 5px; color: var(--pale); }
.modal header svg { width: 24px; height: 24px; color: var(--purple); }
.modal header span { margin-left: auto; font: 700 17px var(--code); }
.modal p { line-height: 38px; white-space: nowrap; }
.modal .note { height: 41px; border-bottom: 1px dotted var(--dim); margin-bottom: 12px; }
.modal form { display: flex; gap: 14px; }
.modal input { flex: 1; height: 39px; padding: 0 15px; border: 1px dotted var(--dim); border-radius: 3px; font: 16px var(--body); }
.modal input::placeholder { color: var(--dim); opacity: 1; }
.modal button { width: 104px; height: 39px; font-size: 15px; font-weight: 700; color: var(--pale); }

.translate {
  position: absolute;
  right: 0;
  top: 357px;
  width: 39px;
  height: 39px;
  padding-left: 12px;
  border-radius: 20px 0 0 20px;
  background: #4f4447;
}
.cursor { position: absolute; left: 696px; top: 255px; }

/* desktop strip and dock */
.desk {
  height: 88px;
  padding: 3px 57px 5px 0;
  background: linear-gradient(var(--purple), var(--purple)) 0 100% / 25% 100% no-repeat, conic-gradient(#17181c 75%, #4b4158 0) 0 0 / 3px 3px;
}
.dock {
  height: 80px;
  padding: 12px 11px 0 70px;
  display: flex;
  justify-content: space-between;
  background: radial-gradient(ellipse 150px 110px at 350px 45px, #b8aaeb, #b8aaeb80 60%, transparent), var(--purple);
  border-radius: 0 20px 20px 0;
}
.app-icon { position: relative; width: 50px; height: 50px; }
.gap { width: 14px; }
.open { background: radial-gradient(circle at 50% 63px, var(--ink) 2px, transparent 2px) no-repeat; padding-bottom: 16px; height: 66px; }
div.open svg { width: 50px; height: 50px; }
.badge { position: absolute; right: -8px; top: -7px; width: 24px; height: 24px; border-radius: 50%; background: var(--tan); color: var(--pale); font-size: 13px; line-height: 24px; text-align: center; }
.mono { font-family: var(--code); fill: var(--tan); }
.serif { font-family: "Liberation Mono", monospace; font-weight: 700; fill: var(--pale); }
.sans { font-family: Lato, sans-serif; font-weight: 700; fill: var(--pale); }
.tee { font-family: "Liberation Serif", serif; font-weight: 700; fill: var(--ink); }
.light { font-weight: 400; stroke: var(--ink); }
```
